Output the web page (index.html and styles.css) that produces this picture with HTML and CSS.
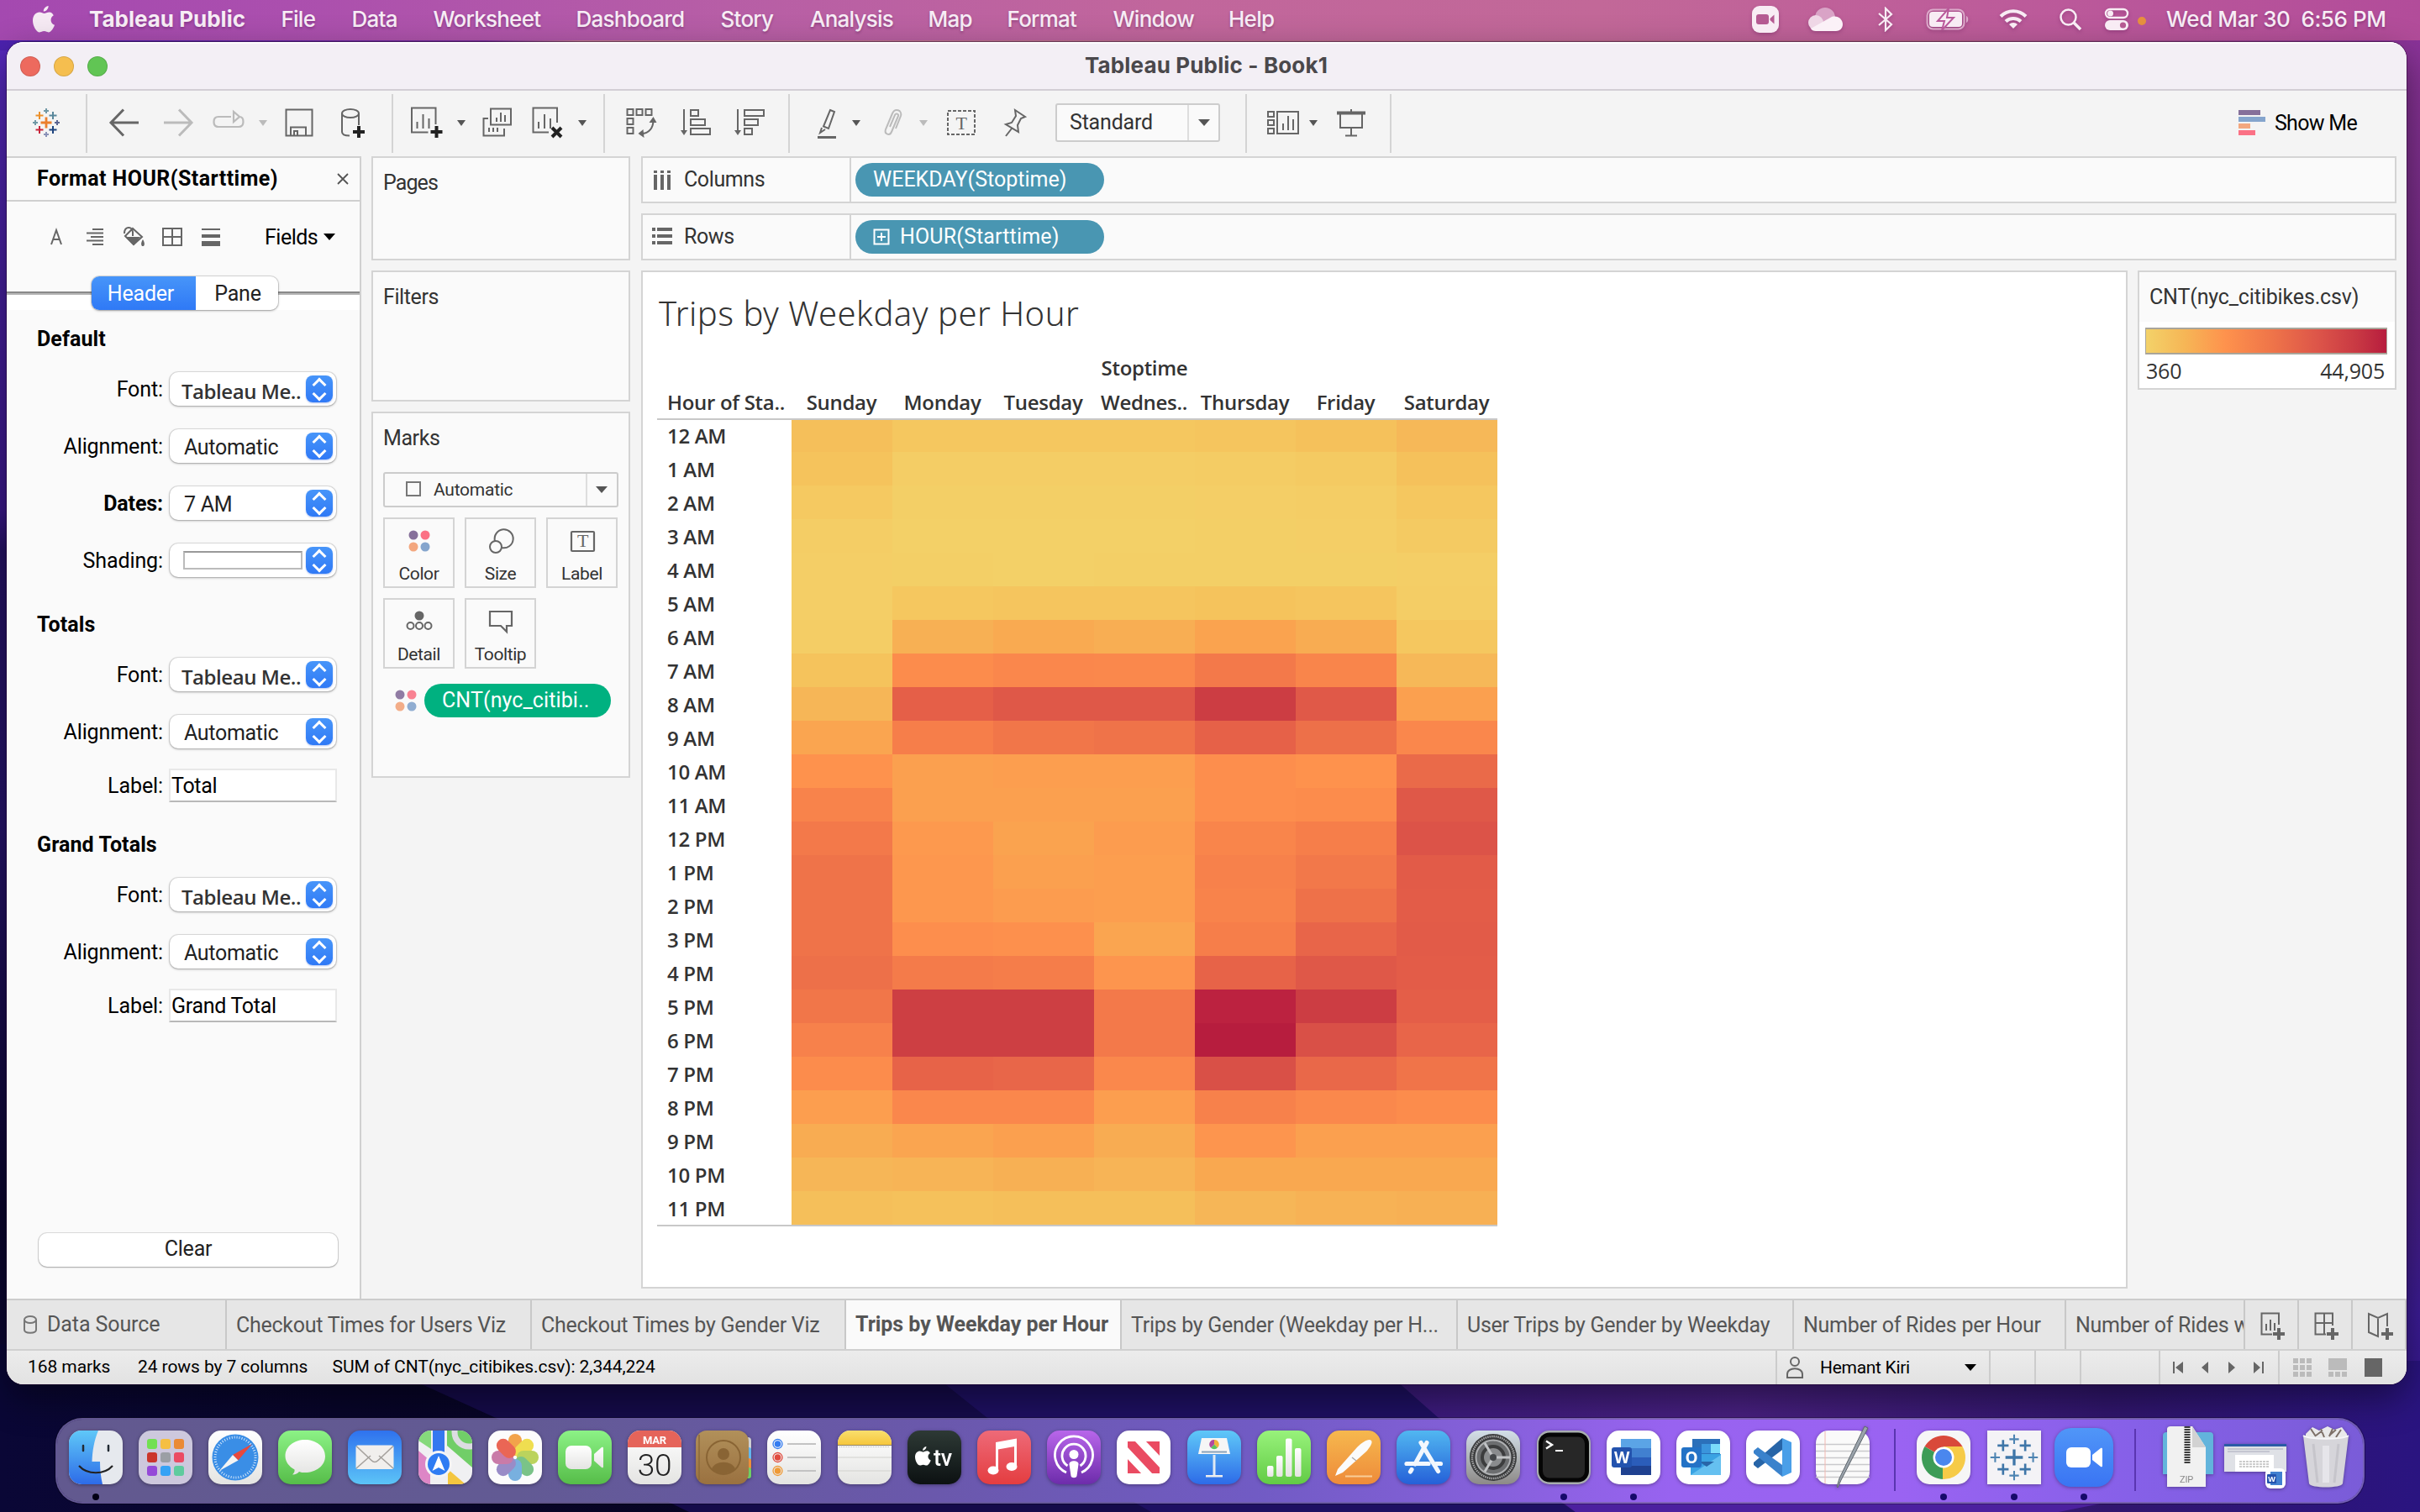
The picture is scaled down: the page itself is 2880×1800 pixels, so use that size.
FILE: index.html
```html
<!DOCTYPE html>
<html lang="en">
<head>
<meta charset="utf-8">
<title>Tableau Public - Book1</title>
<link rel="stylesheet" href="styles.css">
</head>
<body>
<svg class="wallpaper" viewBox="0 0 2880 1800" preserveAspectRatio="none">
  <defs>
    <linearGradient id="wl" x1="0" y1="0" x2="0" y2="1"><stop offset="0" stop-color="#5a2cc4"/><stop offset=".2" stop-color="#451f9c"/><stop offset=".37" stop-color="#3a1888"/><stop offset=".4" stop-color="#241262"/><stop offset=".6" stop-color="#26146a"/><stop offset=".75" stop-color="#160b48"/><stop offset=".88" stop-color="#0a052c"/><stop offset="1" stop-color="#0c0834"/></linearGradient>
    <linearGradient id="wr" x1="0" y1="0" x2="0" y2="1"><stop offset="0" stop-color="#8f359c"/><stop offset=".2" stop-color="#702a80"/><stop offset=".5" stop-color="#60246e"/><stop offset=".75" stop-color="#4a1f78"/><stop offset=".87" stop-color="#3c1c96"/><stop offset="1" stop-color="#2c1280"/></linearGradient>
    <linearGradient id="wb" x1="0" y1="0" x2="1" y2="0"><stop offset="0" stop-color="#3a1a7c"/><stop offset=".35" stop-color="#482080"/><stop offset=".7" stop-color="#31166e"/><stop offset="1" stop-color="#2a1480"/></linearGradient>
    <linearGradient id="wt" x1="0" y1="0" x2="1" y2="0"><stop offset="0" stop-color="#4c22b0"/><stop offset=".2" stop-color="#7a2f9c"/><stop offset=".24" stop-color="#c07a90"/><stop offset=".8" stop-color="#b06080"/><stop offset="1" stop-color="#8a3299"/></linearGradient>
    <linearGradient id="wd" x1="0" y1="0" x2="1" y2="0"><stop offset="0" stop-color="#0a0736"/><stop offset=".4" stop-color="#08052a"/><stop offset="1" stop-color="#07041f"/></linearGradient>
  </defs>
  <rect width="2880" height="1800" fill="url(#wr)"/>
  <rect width="1440" height="1640" fill="url(#wl)"/>
  <rect y="48" width="2880" height="12" fill="url(#wt)"/>
  <rect y="1600" width="1000" height="200" fill="url(#wd)"/>
  <path d="M440 1620L590 1688L820 1800H2000V1620z" fill="#150b4a"/>
  <path d="M1090 1620L1175 1688L1370 1800H2000V1620z" fill="#1e1062"/>
  <path d="M1635 1620L1712 1688L1875 1800H2880V1620z" fill="url(#wb)"/>
  <path d="M1862 1790L1875 1800H2450L2500 1790z" fill="#4c209f"/>
</svg>

<header class="menubar">
  <svg class="apple" viewBox="0 0 26 32"><path d="M18.600 0c.2 3.300-2.600 6.600-5.800 6.600C12.500 3.500 15.400.4 18.600 0zM24.800 11.200c-5 3-3.900 9.800 1.200 11.600-1.600 4.600-4.500 8.600-7.200 8.600-2 0-2.800-1.300-5.300-1.300s-3.500 1.300-5.300 1.300C4.400 31.400 0 24 0 17.400 0 11 4 7.500 8 7.500c2.400 0 4.200 1.500 5.700 1.500 1.400 0 3.500-1.600 6.200-1.600 1.900 0 3.800 1.300 4.900 3.800z" fill="#f6eaf4"/></svg>
  <b>Tableau Public</b><span style="width:84px">File</span><span style="width:97px">Data</span><span style="width:170px">Worksheet</span><span style="width:172px">Dashboard</span><span style="width:106.500px">Story</span><span style="width:140.500px">Analysis</span><span style="width:94px">Map</span><span style="width:126px">Format</span><span style="width:137.500px">Window</span><span style="width:80px">Help</span>
  <div class="tray">
    <svg width="34" height="34" viewBox="0 0 34 34"><rect x="1" y="1" width="32" height="32" rx="9" fill="#f8ecf4"/><rect x="6" y="11" width="15" height="12" rx="3" fill="#b55a92"/><path d="M22.500 16l5-4.500v11l-5-4.500z" fill="#b55a92"/></svg>
    <svg width="42" height="30" viewBox="0 0 42 30"><circle cx="20" cy="13" r="12" fill="#d9a3c6"/><circle cx="9" cy="19" r="9" fill="#efd7e6"/><path d="M3 26L28 12c8-2 13 4 13 9 0 5-4 8-8 8H9c-3 0-5-1-6-3z" fill="#fbf1f7"/></svg>
    <svg width="20" height="30" viewBox="0 0 20 30" fill="none" stroke="#f8ecf4" stroke-width="2.200"><path d="M2 8l15 13-7 7V2l7 7L2 22"/></svg>
    <svg width="52" height="26" viewBox="0 0 52 26"><rect x="1.500" y="1.500" width="44" height="23" rx="7" fill="none" stroke="#dca9ca" stroke-width="2"/><rect x="4" y="4" width="39" height="18" rx="4" fill="#f8ecf4"/><path d="M48 9c3 1 3 7 0 8z" fill="#dca9ca"/><path d="M27 0L14 15h8l-3 11L33 11h-8z" fill="#f8ecf4" stroke="#b9589a" stroke-width="2"/></svg>
    <svg width="34" height="26" viewBox="0 0 34 26" fill="none" stroke="#f8ecf4" stroke-width="4"><path d="M2 9.500a21 21 0 0 1 30 0"/><path d="M8 15.500a13 13 0 0 1 18 0"/><path d="M17 24l-5-5a7 7 0 0 1 10 0z" fill="#f8ecf4" stroke="none"/></svg>
    <svg width="28" height="28" viewBox="0 0 28 28" fill="none" stroke="#f8ecf4" stroke-width="2.500"><circle cx="11.500" cy="11.500" r="9"/><path d="M18 18l8 8" stroke-width="3.500"/></svg>
    <svg width="30" height="28" viewBox="0 0 30 28"><rect x="2" y="2" width="26" height="10" rx="5" fill="none" stroke="#f8ecf4" stroke-width="2.400"/><circle cx="7.500" cy="7" r="3.500" fill="#f8ecf4"/><rect x="1" y="15" width="28" height="12" rx="6" fill="#f8ecf4"/><circle cx="22.500" cy="21" r="3.600" fill="#b55a92"/></svg>
    <i class="rec"></i>
    <time>Wed Mar 30&nbsp; 6:56 PM</time>
  </div>
</header>

<main class="window">
  <div class="titlebar"><i class="light close"></i><i class="light minimise"></i><i class="light zoom"></i><h1>Tableau Public - Book1</h1></div>

  <div class="toolbar">
    <div class="group g0"><svg class="ic" viewBox="0 0 40 40" stroke-width="2.400" fill="none"><path d="M20 13.500v13M13.500 20h13" stroke="#eb7f2d" stroke-width="2.800"/><path d="M12 7v9M7.500 11.500h9" stroke="#eb912c"/><path d="M28 7v9M23.500 11.500h9" stroke="#59879b"/><path d="M12 24v9M7.500 28.500h9" stroke="#c8253a"/><path d="M28 24v9M23.500 28.500h9" stroke="#1f447e"/><path d="M20 3v6M17 6h6M7 17v6M4 20h6" stroke="#7199a6" stroke-width="2"/><path d="M33 17v6M30 20h6" stroke="#5c6692" stroke-width="2"/><path d="M20 31v6M17 34h6" stroke="#8a92b8" stroke-width="2"/></svg></div>
    <div class="group g1">
      <svg class="ic w64" viewBox="0 0 40 40"><path d="M37 20H4M19 4.500L4 20l15 15.500" stroke-width="3"/></svg>
      <svg class="ic w64 dim" viewBox="0 0 40 40"><path d="M3 20h33M21 4.500L36 20 21 35.500" stroke-width="3"/></svg>
      <svg class="ic w56 dim" viewBox="0 0 40 40"><path d="M23 13H8c-4 0-5.500 2-5.500 6s1.500 6 5.500 6h24c4 0 5.500-2 5.500-6s-1.500-6-4.500-6M26 7v12l7-6z" stroke-width="2.200"/></svg>
      <i class="cell w26"><i class="caret dim"></i></i>
      <svg class="ic w60" viewBox="0 0 40 40"><path d="M4.500 4.500h31v31h-31zM10 35v-9.500h18V35M14 35v-5h4v5"/></svg>
      <svg class="ic w68" viewBox="0 0 40 40"><path d="M7 9v22c0 3 4 4.500 9 4.500M27 9v14"/><ellipse cx="17" cy="9" rx="10" ry="5"/><path d="M27 24v14M20 31h14" stroke="#222" stroke-width="4"/></svg>
    </div>
    <div class="group g2">
      <svg class="ic w61" viewBox="0 0 40 40"><path d="M31 22V2.500H2.500v29H22M9 27v-8M16 27V10M23 27V15"/><path d="M32 24v14M25 31h14" stroke="#222" stroke-width="4"/></svg>
      <i class="cell w22"><i class="caret"></i></i>
      <svg class="ic w64" viewBox="0 0 40 40"><path d="M12 3.500h24v19H12zM19 19v-5M24 19V8M29 19v-8M9 15H3.500v20.500H28V27M10 31v-5M15 31v-5M20 31v-5"/></svg>
      <svg class="ic w56" viewBox="0 0 40 40"><path d="M31 20V2.500H2.500v29H21M9 27v-8M16 27V10M23 27V15"/><path d="M25 26l11 11M36 26L25 37" stroke="#222" stroke-width="4"/></svg>
      <i class="cell w26"><i class="caret"></i></i>
    </div>
    <div class="group g3">
      <svg class="ic w65" viewBox="0 0 40 40"><path d="M3 4h7v7H3zM14 4h7v7h-7zM25 4h7v7h-7zM3 15h7v7H3zM3 26h7v7H3zM34 17c0 9-5 16-14 16" /><path d="M29 20l5-7 4 7zM22 28l-6 5 7 5z" fill="#666" stroke="none"/></svg>
      <svg class="ic w64" viewBox="0 0 40 40"><path d="M6 4v28M14 5h9v7h-9zM14 16h17v7H14zM14 27h23v7H14z"/><path d="M2 29h8l-4 6z" fill="#666" stroke="none"/></svg>
      <svg class="ic w64" viewBox="0 0 40 40"><path d="M6 4v28M14 5h23v7H14zM14 16h16v7H14zM14 27h9v7h-9z"/><path d="M2 29h8l-4 6z" fill="#666" stroke="none"/></svg>
    </div>
    <div class="group g4">
      <svg class="ic w46" viewBox="0 0 40 40"><path d="M24 5l5 2-7 20-6-2.500zM14 26l-2 6 6-4" /><path d="M9 37.500h22" stroke-width="3"/></svg>
      <i class="cell w24"><i class="caret"></i></i>
      <svg class="ic w60 dim" viewBox="0 0 40 40"><path d="M18 25l6-14c1-3 5-1 4 1l-8 19c-2 5-9 3-7-3l8-19c3-7 12-4 10 3l-6 15"/></svg>
      <i class="cell w16"><i class="caret dim"></i></i>
      <svg class="ic w74" viewBox="0 0 40 40"><rect x="4" y="6" width="32" height="28" stroke-dasharray="4 2"/><text x="20" y="27.500">T</text></svg>
      <svg class="ic w52" viewBox="0 0 40 40"><path d="M21 5l12 8-5 2-4 8 1 8-15-9 7-2 5-8zM17 27l-7 9"/></svg>
      <div class="combo std"><span>Standard</span><i class="caret big"></i></div>
    </div>
    <div class="group g5">
      <svg class="ic w52" viewBox="0 0 40 40"><path d="M2 7h7v6H2zM2 17h7v6H2zM2 27h7v6H2zM13 7h25v26H13zM20 29v-8M26 29V12M32 29V16"/></svg>
      <i class="cell w20"><i class="caret"></i></i>
      <svg class="ic w70" viewBox="0 0 40 40"><path d="M7 9v17h26V9M20 4v4M20 26v9M13 35.500h14"/><path d="M3 8.500h34" stroke-width="4"/></svg>
    </div>
    <div class="showme"><svg width="32" height="32" viewBox="0 0 32 32"><path d="M0 0h26v6H0z" fill="#86709a"/><path d="M0 8h32v6H0z" fill="#85a5cd"/><path d="M0 16h14v6H0z" fill="#f3a77f"/><path d="M0 24h20v6H0z" fill="#fb7185"/></svg><span>Show Me</span></div>
  </div>

  <div class="work">
    <aside class="format">
      <div class="fhead"><b>Format HOUR(Starttime)</b><svg width="16" height="16" viewBox="0 0 16 16" stroke="#555" stroke-width="1.800"><path d="M2 2l12 12M14 2L2 14"/></svg></div>
      <div class="ficons">
        <svg viewBox="0 0 26 26"><path d="M7 22L13 5l6 17M9 16h8" stroke-width="2"/></svg>
        <svg viewBox="0 0 26 26"><path d="M10 4h13M3 8.500h20M8 13h15M3 17.500h20M10 22h13" stroke-width="2"/></svg>
        <svg viewBox="0 0 26 26"><path d="M12 3l11 10-10 9L3 12zM2 9c0-9 9-9 10-2v5"/><path d="M3 13h18l-8 10zM24 16c-3 5-2 8 0 8s3-3 0-8z" fill="#666" stroke="none"/></svg>
        <svg viewBox="0 0 26 26"><path d="M2 3h22v20H2zM13 3v20M2 13h22" stroke-width="2"/></svg>
        <svg viewBox="0 0 26 26"><path d="M2 4h22" stroke-width="2"/><path d="M2 12h22" stroke-width="4"/><path d="M2 21h22" stroke-width="6"/></svg>
        <span>Fields</span><i class="tri"></i>
      </div>
      <div class="segwrap"><div class="seg"><span class="sel-tab">Header</span><span>Pane</span></div></div>
      <section class="s1">
        <h2>Default</h2>
        <div class="row"><label>Font:</label><div class="sel"><b>Tableau Me..</b><i class="step"></i></div></div>
        <div class="row"><label>Alignment:</label><div class="sel"><span>Automatic</span><i class="step"></i></div></div>
        <div class="row"><label><b>Dates:</b></label><div class="sel"><span>7 AM</span><i class="step"></i></div></div>
        <div class="row"><label>Shading:</label><div class="sel"><em class="swatch"></em><i class="step"></i></div></div>
      </section>
      <section class="s2">
        <h2>Totals</h2>
        <div class="row"><label>Font:</label><div class="sel"><b>Tableau Me..</b><i class="step"></i></div></div>
        <div class="row"><label>Alignment:</label><div class="sel"><span>Automatic</span><i class="step"></i></div></div>
        <div class="row lab"><label>Label:</label><div class="inp">Total</div></div>
      </section>
      <section class="s3">
        <h2>Grand Totals</h2>
        <div class="row"><label>Font:</label><div class="sel"><b>Tableau Me..</b><i class="step"></i></div></div>
        <div class="row"><label>Alignment:</label><div class="sel"><span>Automatic</span><i class="step"></i></div></div>
        <div class="row lab"><label>Label:</label><div class="inp">Grand Total</div></div>
      </section>
      <div class="clear">Clear</div>
    </aside>

    <div class="cards">
      <div class="card pages">Pages</div>
      <div class="card filters">Filters</div>
      <div class="card marks">Marks
        <div class="combo auto"><i class="sq"></i><span>Automatic</span><i class="caret big"></i></div>
        <div class="btns">
          <div class="btn"><svg viewBox="0 0 40 40"><circle cx="13" cy="13" r="5.500" fill="#86709a"/><circle cx="27" cy="13" r="5.500" fill="#fb7185"/><circle cx="13" cy="27" r="5.500" fill="#f3a77f"/><circle cx="27" cy="27" r="5.500" fill="#85a5cd"/></svg>Color</div>
          <div class="btn"><svg viewBox="0 0 40 40" fill="none" stroke="#666" stroke-width="2"><path d="M13 20a11 11 0 1 1 8 8"/><circle cx="14" cy="27" r="7"/></svg>Size</div>
          <div class="btn"><svg viewBox="0 0 40 40" fill="none" stroke="#666" stroke-width="2.200"><rect x="7" y="9" width="27" height="23" rx="1"/><text x="20.500" y="27">T</text></svg>Label</div>
          <div class="btn"><svg viewBox="0 0 40 40" fill="none" stroke="#666" stroke-width="2"><circle cx="20" cy="13" r="4.500" fill="#666"/><circle cx="9.500" cy="25" r="4"/><circle cx="20" cy="25" r="4"/><circle cx="30.500" cy="25" r="4"/></svg>Detail</div>
          <div class="btn"><svg viewBox="0 0 40 40" fill="none" stroke="#666" stroke-width="2.200"><path d="M7 8h26v17h-6v7l-7-7H7z"/></svg>Tooltip</div>
        </div>
        <div class="pillrow"><svg width="40" height="40" viewBox="0 0 40 40"><circle cx="13" cy="13" r="5.500" fill="#917ca4"/><circle cx="27" cy="13" r="5.500" fill="#f98292"/><circle cx="13" cy="27" r="5.500" fill="#f3ad88"/><circle cx="27" cy="27" r="5.500" fill="#90add1"/></svg><span class="pill measure">CNT(nyc_citibi..</span></div>
      </div>
    </div>

    <div class="main">
      <div class="shelf"><div class="name"><svg viewBox="0 0 26 26"><path d="M5 2v3M13 2v3M21 2v3M5 7v18M13 7v18M21 7v18" stroke-width="4"/></svg>Columns</div><span class="pill dimension">WEEKDAY(Stoptime)</span></div>
      <div class="shelf"><div class="name"><svg viewBox="0 0 26 26"><path d="M1 4h4M1 12h4M1 20h4M7 4h18M7 12h18M7 20h18" stroke-width="4"/></svg>Rows</div><span class="pill dimension"><svg width="20" height="20" viewBox="0 0 20 20" fill="none" stroke="#fff" stroke-width="2"><path d="M1.500 1.500h17v17h-17zM10 5v10M5 10h10"/></svg><span class="hour">HOUR(Starttime)</span></span></div>
      <div class="lower">
        <div class="viz">
          <h3>Trips by Weekday per Hour</h3>
          <div class="field">Stoptime</div>
          <div class="heads"><span>Hour of Sta..</span><span>Sunday</span><span>Monday</span><span>Tuesday</span><span>Wednes..</span><span>Thursday</span><span>Friday</span><span>Saturday</span></div>
          <div class="heat" id="heat"></div>
        </div>
        <div class="legend">
          <div class="lt">CNT(nyc_citibikes.csv)</div>
          <div class="ramp"></div>
          <div class="nums"><span>360</span><span>44,905</span></div>
        </div>
      </div>
    </div>
  </div>

  <nav class="tabs">
    <span class="ds"><svg width="18" height="24" viewBox="0 0 18 24" fill="none" stroke="#777" stroke-width="2"><path d="M2 6v12c0 5 14 5 14 0V6"/><ellipse cx="9" cy="6" rx="7" ry="4"/></svg>Data Source</span>
    <span style="width:363px">Checkout Times for Users Viz</span>
    <span style="width:374px">Checkout Times by Gender Viz</span>
    <span class="active" style="width:328px">Trips by Weekday per Hour</span>
    <span style="width:400px">Trips by Gender (Weekday per H...</span>
    <span style="width:400px">User Trips by Gender by Weekday</span>
    <span style="width:324px">Number of Rides per Hour</span>
    <span class="cut">Number of Rides w</span>
    <i><svg viewBox="0 0 40 40"><path d="M28 20V6.500H7.500v25H20M13 27v-8M18 27V14M23 27v-9"/><path d="M28 24v14M21 31h14" stroke-width="4"/></svg></i>
    <i><svg viewBox="0 0 40 40"><path d="M28 21V6.500H7.500v25H20M18 7v24M8 18h20"/><path d="M28 24v14M21 31h14" stroke-width="4"/></svg></i>
    <i><svg viewBox="0 0 40 40"><path d="M29 22V7l-11 5-11-5v22l11 5V13"/><path d="M29 24v14M22 31h14" stroke-width="4"/></svg></i>
  </nav>

  <footer class="status">
    <span style="width:131px">168 marks</span><span style="width:231.500px">24 rows by 7 columns</span><span>SUM of CNT(nyc_citibikes.csv): 2,344,224</span>
    <div class="user"><svg width="22" height="28" viewBox="0 0 22 28" fill="none" stroke="#666" stroke-width="2"><circle cx="11" cy="7" r="5"/><path d="M2 26v-4c0-9 18-9 18 0v4z"/></svg>Hemant Kiri<i class="tri"></i></div>
    <div style="width:54px"></div><div style="width:54px"></div><div style="width:94px"></div>
    <div class="nav"><svg width="110" height="18" viewBox="0 0 110 18" fill="#666"><path d="M0 2h2v14H0zM12 2v14L3 9zM42 2v14l-8-7zM66 2v14l8-7zM96 2v14l8-7zM106 2h2v14h-2z"/></svg></div>
    <div class="views"><svg width="108" height="24" viewBox="0 0 108 24"><path d="M0 1h6v6H0zM8 1h6v6H8zM16 1h6v6h-6zM0 9h6v6H0zM8 9h6v6H8zM16 9h6v6h-6zM0 17h6v6H0zM8 17h6v6H8zM16 17h6v6h-6zM42 1h22v14H42zM42 17h6v6h-6zM50 17h6v6h-6zM58 17h6v6h-6z" fill="#bbb"/><path d="M85 1h21v22H85z" fill="#666"/></svg></div>
  </footer>
</main>

<svg width="0" height="0" class="defs"><defs>
  <linearGradient id="gB" x1="0" y1="0" x2="0" y2="1"><stop offset="0" stop-color="#5fc8f8"/><stop offset="1" stop-color="#2d6be8"/></linearGradient>
  <linearGradient id="gG" x1="0" y1="0" x2="0" y2="1"><stop offset="0" stop-color="#8cf286"/><stop offset="1" stop-color="#56bd49"/></linearGradient>
  <linearGradient id="gM" x1="0" y1="0" x2="0" y2="1"><stop offset="0" stop-color="#2f72ee"/><stop offset="1" stop-color="#5cc4f7"/></linearGradient>
  <linearGradient id="gW" x1="0" y1="0" x2="0" y2="1"><stop offset="0" stop-color="#fff"/><stop offset="1" stop-color="#e4e4e2"/></linearGradient>
  <linearGradient id="gY" x1="0" y1="0" x2="0" y2="1"><stop offset="0" stop-color="#f9df6d"/><stop offset="1" stop-color="#f6c63c"/></linearGradient>
  <linearGradient id="gK" x1="0" y1="0" x2="0" y2="1"><stop offset="0" stop-color="#2d3935"/><stop offset="1" stop-color="#0c1112"/></linearGradient>
  <linearGradient id="gR" x1="0" y1="0" x2="0" y2="1"><stop offset="0" stop-color="#ee6a78"/><stop offset="1" stop-color="#e43d40"/></linearGradient>
  <linearGradient id="gP" x1="0" y1="0" x2="0" y2="1"><stop offset="0" stop-color="#b866ea"/><stop offset="1" stop-color="#6d2cab"/></linearGradient>
  <linearGradient id="gN" x1="0" y1="0" x2="0" y2="1"><stop offset="0" stop-color="#98f27b"/><stop offset="1" stop-color="#62cb45"/></linearGradient>
  <linearGradient id="gO" x1="0" y1="0" x2="0" y2="1"><stop offset="0" stop-color="#f6b84e"/><stop offset="1" stop-color="#ee8b3a"/></linearGradient>
  <linearGradient id="gA" x1="0" y1="0" x2="0" y2="1"><stop offset="0" stop-color="#51b7f1"/><stop offset="1" stop-color="#2560d8"/></linearGradient>
  <linearGradient id="gS" x1="0" y1="0" x2="0" y2="1"><stop offset="0" stop-color="#d3dfe8"/><stop offset="1" stop-color="#8d8a88"/></linearGradient>
  <linearGradient id="gC" x1="0" y1="0" x2="0" y2="1"><stop offset="0" stop-color="#b1905a"/><stop offset="1" stop-color="#9a7140"/></linearGradient>
  <linearGradient id="gZ" x1="0" y1="0" x2="0" y2="1"><stop offset="0" stop-color="#5096f8"/><stop offset="1" stop-color="#3a74f3"/></linearGradient>
  <clipPath id="rr"><rect width="64" height="64" rx="15"/></clipPath>
</defs></svg>

<div class="dock">
  <div class="app on"><svg viewBox="0 0 64 64"><g clip-path="url(#rr)"><path d="M0 0h64v64H0z" fill="#e6e9ee"/><path d="M0 0h35c-5 12-7 24-7.500 37H37c0 10 1 18 3 27H0z" fill="url(#gB)"/></g><path d="M17 18v6M47 18v6" stroke="#222a33" stroke-width="2.500" stroke-linecap="round"/><path d="M12 42c10 11 30 11 40 0" fill="none" stroke="#222" stroke-width="2.200"/></svg></div>
  <div class="app"><svg viewBox="0 0 64 64"><rect width="64" height="64" rx="15" fill="#cdc8dd"/><g><rect x="10" y="10" width="12" height="12" rx="3" fill="#72e052"/><rect x="26" y="10" width="12" height="12" rx="3" fill="#f5bf42"/><rect x="42" y="10" width="12" height="12" rx="3" fill="#ea8a36"/><rect x="10" y="26" width="12" height="12" rx="3" fill="#cb352c"/><rect x="26" y="26" width="12" height="12" rx="3" fill="#9b9fa5"/><rect x="42" y="26" width="12" height="12" rx="3" fill="#eb4b63"/><rect x="10" y="42" width="12" height="12" rx="3" fill="#9549d8"/><rect x="26" y="42" width="12" height="12" rx="3" fill="#36a2f5"/><rect x="42" y="42" width="12" height="12" rx="3" fill="#5fcb9e"/></g></svg></div>
  <div class="app"><svg viewBox="0 0 64 64"><rect width="64" height="64" rx="15" fill="url(#gW)"/><circle cx="32" cy="32" r="27.500" fill="#3a8ee6"/><circle cx="32" cy="32" r="24" fill="none" stroke="#cfe4fa" stroke-width="3" stroke-dasharray="1 2"/><path d="M52 16L35.500 35.500 29 29z" fill="#e8483c"/><path d="M13 48l16-19 6.500 6.500z" fill="#f4f4f4"/></svg></div>
  <div class="app"><svg viewBox="0 0 64 64"><rect width="64" height="64" rx="15" fill="url(#gG)"/><path d="M32 11c13 0 24 8 24 19.500S45 50 32 50c-3 0-5 0-7-1-2 2-4 3.500-8 3.500 2-2 3-4 2.500-6C13 43 8.500 37 8.500 30.500 8.500 19 19 11 32 11z" fill="url(#gW)"/></svg></div>
  <div class="app"><svg viewBox="0 0 64 64"><rect width="64" height="64" rx="15" fill="url(#gM)"/><rect x="9.500" y="17.500" width="45" height="28.500" rx="2.500" fill="#f1efed"/><path d="M10 45l17-15M54 45L37 30M10 18.500l18 17c2.500 2.500 5.500 2.500 8 0l18-17" fill="none" stroke="#a5a19d" stroke-width="1.600"/></svg></div>
  <div class="app"><svg viewBox="0 0 64 64"><g clip-path="url(#rr)"><path d="M0 0h64v64H0z" fill="#f0f0f2"/><path d="M0 0h15v22L0 12z" fill="#86d97c"/><path d="M34 0h30v44L34 18z" fill="#71ce68"/><path d="M0 24l14 12v28H0z" fill="#dd86c6"/><path d="M35 46l21 18H35z" fill="#f4c63f"/><circle cx="60" cy="2" r="17" fill="none" stroke="#dcdce2" stroke-width="7"/><path d="M17 0h14v30H17z" fill="#3478f0"/></g><circle cx="24" cy="40" r="16" fill="#f4f4f6"/><circle cx="24" cy="40" r="13" fill="#2f7cf3"/><path d="M24 30l7.500 18-7.500-4-7.500 4z" fill="#fff"/></svg></div>
  <div class="app"><svg viewBox="0 0 64 64"><rect width="64" height="64" rx="15" fill="#fcfcfc"/><g opacity=".9"><rect x="24" y="4" width="16" height="26" rx="8" fill="#f29a38"/><rect x="24" y="4" width="16" height="26" rx="8" fill="#eedb3e" transform="rotate(45 32 32)"/><rect x="24" y="4" width="16" height="26" rx="8" fill="#b4cf4c" transform="rotate(90 32 32)"/><rect x="24" y="4" width="16" height="26" rx="8" fill="#6dbd7c" transform="rotate(135 32 32)"/><rect x="24" y="4" width="16" height="26" rx="8" fill="#6aa8dc" transform="rotate(180 32 32)"/><rect x="24" y="4" width="16" height="26" rx="8" fill="#8f80c2" transform="rotate(225 32 32)"/><rect x="24" y="4" width="16" height="26" rx="8" fill="#c46ea0" transform="rotate(270 32 32)"/><rect x="24" y="4" width="16" height="26" rx="8" fill="#e95643" transform="rotate(315 32 32)"/></g></svg></div>
  <div class="app"><svg viewBox="0 0 64 64"><rect width="64" height="64" rx="15" fill="url(#gG)"/><rect x="9" y="18" width="31" height="28" rx="7" fill="url(#gW)"/><path d="M43 28l9-8c1-.8 2 0 2 1v22c0 1-1 1.800-2 1l-9-8z" fill="url(#gW)"/></svg></div>
  <div class="app"><svg viewBox="0 0 64 64"><g clip-path="url(#rr)"><path d="M0 0h64v64H0z" fill="url(#gW)"/><path d="M0 0h64v20H0z" fill="#e5645a"/></g><text x="32" y="15.500" class="mar">MAR</text><text x="32" y="54" class="day">30</text></svg></div>
  <div class="app"><svg viewBox="0 0 68 64" class="wide"><rect x="48" y="8" width="18" height="16" rx="4" fill="#cfcfd2"/><rect x="48" y="20" width="18" height="16" rx="3" fill="#62b7ef"/><rect x="48" y="33" width="18" height="14" rx="3" fill="#ee8e3a"/><rect x="48" y="44" width="18" height="13" rx="3" fill="#6fd064"/><rect width="63" height="64" rx="13" fill="url(#gC)"/><path d="M4 5v54" stroke="#8d6a38" stroke-width="1.500"/><circle cx="33" cy="32" r="20" fill="none" stroke="#896434" stroke-width="2"/><circle cx="33" cy="28" r="7" fill="#896434"/><path d="M19 46c3-11 25-11 28 0-8 7-20 7-28 0z" fill="#896434"/></svg></div>
  <div class="app"><svg viewBox="0 0 64 64"><rect width="64" height="64" rx="15" fill="url(#gW)"/><g fill="none" stroke-width="1.300"><circle cx="12.500" cy="16" r="5.500" stroke="#347cf0"/><circle cx="12.500" cy="32" r="5.500" stroke="#e04b3e"/><circle cx="12.500" cy="48" r="5.500" stroke="#ef9a36"/></g><circle cx="12.500" cy="16" r="3.800" fill="#347cf0"/><circle cx="12.500" cy="32" r="3.800" fill="#e04b3e"/><circle cx="12.500" cy="48" r="3.800" fill="#ef9a36"/><path d="M24 16h34M24 32h34M24 48h34" stroke="#c3c3c3" stroke-width="1.800"/></svg></div>
  <div class="app"><svg viewBox="0 0 64 64"><g clip-path="url(#rr)"><path d="M0 0h64v64H0z" fill="url(#gW)"/><path d="M0 0h64v17H0z" fill="url(#gY)"/><path d="M0 17.500h64" stroke="#8d8060"/></g><path d="M2 19.500h60" stroke="#bbb" stroke-dasharray="1 1"/><path d="M0 32h64M0 48h64" stroke="#d2d2ce" stroke-width="1.200"/></svg></div>
  <div class="app"><svg viewBox="0 0 64 64"><rect width="64" height="64" rx="15" fill="url(#gK)"/><path d="M18.600 0c.2 3.300-2.600 6.600-5.800 6.600C12.500 3.500 15.400.4 18.600 0zM24.800 11.200c-5 3-3.900 9.800 1.200 11.600-1.600 4.600-4.500 8.600-7.200 8.600-2 0-2.800-1.300-5.300-1.300s-3.500 1.300-5.300 1.300C4.400 31.400 0 24 0 17.400 0 11 4 7.500 8 7.500c2.400 0 4.200 1.500 5.700 1.500 1.400 0 3.500-1.600 6.200-1.600 1.900 0 3.800 1.300 4.900 3.800z" transform="translate(9 19) scale(.72)" fill="#fff"/><text x="42" y="42" class="tv">tv</text></svg></div>
  <div class="app"><svg viewBox="0 0 64 64"><rect width="64" height="64" rx="15" fill="url(#gR)"/><path d="M45.500 12v31" stroke="#fff" stroke-width="3"/><path d="M22 14l25-4.500v9L22 23zM22 14h3v34h-3z" fill="#fff"/><ellipse cx="19" cy="47.500" rx="6.500" ry="5" fill="#fff"/><ellipse cx="41" cy="43" rx="6.500" ry="5" fill="#fff"/></svg></div>
  <div class="app"><svg viewBox="0 0 64 64"><rect width="64" height="64" rx="15" fill="url(#gP)"/><g fill="none" stroke="#fff" stroke-width="2.800"><path d="M23 50a22.500 22.500 0 1 1 18 0"/><path d="M24.500 42a14 14 0 1 1 15 0"/></g><circle cx="32" cy="28.500" r="5.500" fill="#fff"/><path d="M26.500 40c0-5 11-5 11 0l-2 14c-.5 3-6.500 3-7 0z" fill="#fff"/></svg></div>
  <div class="app"><svg viewBox="0 0 64 64"><rect width="64" height="64" rx="15" fill="#fff"/><path d="M13 13h38v38H13z" fill="#ea4b62"/><path d="M21 12h13L52 31v14zM12 19l31 33H30L12 33z" fill="#fff"/></svg></div>
  <div class="app"><svg viewBox="0 0 64 64"><rect width="64" height="64" rx="15" fill="url(#gB)"/><path d="M17 9h30l4 19H13z" fill="#f6f6f6"/><path d="M17 25.500h30" stroke="#8ba2b8" stroke-width="2"/><path d="M32 16.500v-5.500a5.500 5.500 0 0 1 4 9.500z" fill="#f0b23c"/><path d="M32 16.500l4 4a5.500 5.500 0 0 1-8 0z" fill="#5cc55c"/><path d="M32 11v5.500l-4 4a5.500 5.500 0 0 1 4-9.500z" fill="#b04aa0"/><path d="M30.500 29h3v24h-3z" fill="#dfe9f3"/><path d="M22 53h20v2.500H22z" fill="#eee"/></svg></div>
  <div class="app"><svg viewBox="0 0 64 64"><rect width="64" height="64" rx="15" fill="url(#gN)"/><g fill="url(#gW)"><rect x="12" y="42" width="7.500" height="13" rx="2"/><rect x="23" y="30" width="7.500" height="25" rx="2"/><rect x="34" y="9.500" width="7.500" height="45.500" rx="2"/><rect x="45" y="21" width="7.500" height="34" rx="2"/></g></svg></div>
  <div class="app"><svg viewBox="0 0 64 64"><rect width="64" height="64" rx="15" fill="url(#gO)"/><path d="M22 54.500h32" stroke="#f9cd98" stroke-width="2"/><path d="M53 12c2 3-2 8-6 13L19 50l-9 4 3-8 23-26c6-6 14-11 17-8z" fill="#fbfbfb"/><path d="M30 32l5 4" stroke="#aaa" stroke-width="1.500"/></svg></div>
  <div class="app"><svg viewBox="0 0 64 64"><rect width="64" height="64" rx="15" fill="url(#gA)"/><g stroke="#f2f7fd" stroke-width="5.200" stroke-linecap="round"><path d="M36 14.500L22 40M29 14.500l20.500 34M12 39.500h26M47 39.500h5.500M18 46.500l-1.500 2.500"/></g></svg></div>
  <div class="app"><svg viewBox="0 0 64 64"><rect width="64" height="64" rx="15" fill="url(#gS)"/><circle cx="32" cy="32" r="28" fill="#3a3b3c"/><circle cx="32" cy="32" r="25" fill="none" stroke="#a3a4a5" stroke-width="2.500" stroke-dasharray="1.500 1"/><circle cx="32" cy="32" r="20.500" fill="#6c6e70" stroke="#aeb0b2" stroke-width="2"/><circle cx="32" cy="32" r="13" fill="#8a8c8e" stroke="#3c3d3e" stroke-width="4"/><path d="M32 32h20M32 32l-10-17M32 32L22 49" stroke="#c2c4c6" stroke-width="3"/><circle cx="32" cy="32" r="4" fill="#44474a"/></svg></div>
  <div class="app on"><svg viewBox="0 0 64 64"><rect width="64" height="64" rx="15" fill="#a9aeb0"/><rect x="2" y="2.500" width="60" height="59" rx="13" fill="#050505"/><rect x="7" y="7.500" width="50" height="49" rx="8" fill="#272727"/><path d="M11 12.500l7 4.500-7 4.500" fill="none" stroke="#fff" stroke-width="2.400"/><path d="M22 24h9" stroke="#fff" stroke-width="2"/></svg></div>
  <div class="app on"><svg viewBox="0 0 64 64"><rect width="64" height="64" rx="15" fill="#fff"/><path d="M17 10h36v11H17z" fill="#5ba4e6"/><path d="M17 21h36v11H17z" fill="#4180d0"/><path d="M17 32h36v10H17z" fill="#2b5dba"/><path d="M17 42h36v11H17z" fill="#1f4190"/><rect x="6" y="20" width="24" height="24" rx="3" fill="#2353ae"/><text x="18" y="39" class="ms">W</text></svg></div>
  <div class="app"><svg viewBox="0 0 64 64"><rect width="64" height="64" rx="15" fill="#fff"/><path d="M19 10h33v22H19z" fill="#2b70ba"/><path d="M30 16h11v11H30z" fill="#3a95dc"/><path d="M41 16h11v11H41z" fill="#7bdcfa"/><path d="M17 28h36v25H17z" fill="#3aa3e3"/><path d="M17 53l36-24v24z" fill="#65c0f0"/><path d="M27 37h18l-9 6z" fill="#2866a8"/><rect x="6" y="20" width="24" height="24" rx="3" fill="#2372c6"/><text x="18" y="39" class="ms">O</text></svg></div>
  <div class="app"><svg viewBox="0 0 64 64"><rect width="64" height="64" rx="15" fill="#fff"/><path d="M43 9l11 5v36l-11 5z" fill="#4a9fe8"/><path d="M43 9v14L14 45l-5-4v-3z" fill="#2765a8"/><path d="M43 55V41L14 20l-5 4v3z" fill="#3a82cc"/></svg></div>
  <div class="app"><svg viewBox="0 -6 64 76" class="tall"><rect width="64" height="64" rx="15" fill="#fafafa"/><path d="M0 16.500h64M0 24.500h64M0 32.500h64M0 40.500h64M0 48.500h64M0 55.500h64" stroke="#c9c9cc" stroke-width="1.300"/><path d="M11 1v62" stroke="#f2b8b0"/><path d="M58-5l4 2-32 62-4 9-1-1 3-10z" fill="#9aa3ab" stroke="#5f666d" stroke-width="1"/></svg></div>
  <i class="dsep"></i>
  <div class="app on"><svg viewBox="0 0 64 64"><rect width="64" height="64" rx="15" fill="#f6f6f6"/><path d="M32 32L9.500 19A26 26 0 0 1 54.500 19z" fill="#d9493a"/><path d="M32 32L9.500 19A26 26 0 0 0 32 58z" fill="#3d9c57"/><path d="M32 32h-1v26A26 26 0 0 0 54.500 19H32z" fill="#f6cb47"/><circle cx="32" cy="32" r="12.500" fill="#fff"/><circle cx="32" cy="32" r="10" fill="#4a87ee"/></svg></div>
  <div class="app on"><svg viewBox="0 0 68 68" class="wide"><path d="M0 0h68v68H0z" fill="#f4f3f6"/><path d="M34 24v20M23 34h22" stroke="#3f76a8" stroke-width="3.500"/><path d="M20 12v14M13 19h14M48 12v14M41 19h14M20 42v14M13 49h14M48 42v14M41 49h14" stroke="#3f76a8" stroke-width="2.800"/><path d="M34 5v12M28 11h12M34 51v12M28 57h12M10 28v12M4 34h12M58 28v12M52 34h12" stroke="#4d84b2" stroke-width="2.200"/></svg></div>
  <div class="app on"><svg viewBox="0 0 70 70" class="huge"><rect width="70" height="70" rx="20" fill="url(#gZ)"/><rect x="14" y="23" width="29" height="24" rx="6" fill="#fff"/><path d="M45 32l10-8c1-.6 2 0 2 1v20c0 1-1 1.600-2 1l-10-8z" fill="#fff"/></svg></div>
  <i class="dsep two"></i>
  <div class="app"><svg viewBox="0 0 64 76" class="tall"><path d="M2 12c0-3 2-4 4-4h52c3 0 4 2 4 4v46H2z" fill="#62b4dc"/><path d="M11 1h26l16 25v47H7V4c0-2 2-3 4-3z" fill="#f1f1f1"/><path d="M37 1v25h16z" fill="#d2d2d2"/><path d="M31 1v44" stroke="#3c3c3c" stroke-width="7" stroke-dasharray="2 1"/><text x="30" y="68" class="zip">ZIP</text></svg></div>
  <div class="app thumb"><svg viewBox="0 0 76 56"><path d="M0 2h74v33H0z" fill="#dfe1e6"/><path d="M0 2h74v3H0z" fill="#2b5aa6"/><path d="M4 8h66M4 11h50" stroke="#aab" stroke-width="1"/><path d="M13 15h46v20H13z" fill="#fff"/><path d="M18 23h36M18 26h36M18 29h36" stroke="#999" stroke-width="1" stroke-dasharray="3 1"/><rect x="49" y="31" width="24" height="24" rx="6" fill="#fff"/><rect x="55" y="35" width="14" height="16" fill="#4180d0"/><rect x="51" y="38" width="11" height="11" rx="1" fill="#2353ae"/><text x="56.500" y="47" class="ms tiny">W</text></svg></div>
  <div class="app bin"><svg viewBox="0 0 64 76" class="tall"><path d="M8 10l8-8 8 4 10-5 8 4 9-3 6 8v8H8z" fill="#e9e9ea"/><path d="M14 4l6 9M26 4l4 10M40 4l-4 9M50 5l-6 9M20 12l8-6M36 12l8-7" stroke="#7d7068" stroke-width="2"/><path d="M5 12c8 5 46 5 54 0l-7 57c-1 6-39 6-40 0z" fill="#d6d5da"/><path d="M5 12c8 5 46 5 54 0" fill="none" stroke="#f6f6f8" stroke-width="2"/><path d="M17 22l5 46M47 22l-5 46" stroke="#c6c5cb" stroke-width="3"/><path d="M32 24v44" stroke="#e6e5ea" stroke-width="8"/></svg></div>
</div>
<script src="heat.js"></script>
</body>
</html>
```
FILE: styles.css
```css
*{box-sizing:border-box}
body{margin:0;width:2880px;height:1800px;overflow:hidden;display:flex;flex-direction:column;font:400 25px/30px Roboto,"Liberation Sans",sans-serif;color:#333;letter-spacing:-.2px;background:#1c0f5a}
i,em{font-style:normal}
h1,h2,h3{margin:0}
.wallpaper{position:absolute;inset:0;width:2880px;height:1800px;z-index:-1}
.defs{position:absolute}

/* macOS menu bar */
.menubar{height:48px;flex:none;display:flex;align-items:center;padding:0 39px 2px 39px;background:linear-gradient(90deg,#a449b0 0,#ab4fae 12%,#b75ea6 30%,#c1669c 48%,#c26898 66%,#bd5c9a 82%,#b24c9a 100%);color:#f8eef6;font:500 26px/46px Inter,sans-serif;letter-spacing:-.75px;text-shadow:0 2px 3px rgba(60,0,60,.3);white-space:pre}
.apple{width:26px;height:32px;margin-right:41px}
.menubar b{font-weight:700;letter-spacing:0;width:228.500px}
.tray{margin-left:auto;display:flex;align-items:center}
.tray svg{filter:drop-shadow(0 2px 2px rgba(60,0,60,.25))}
.tray svg:nth-of-type(1){margin-right:34px}
.tray svg:nth-of-type(2){margin-right:40px}
.tray svg:nth-of-type(3){margin-right:38px}
.tray svg:nth-of-type(4){margin-right:35px}
.tray svg:nth-of-type(5){margin-right:37px}
.tray svg:nth-of-type(6){margin-right:26px}
.tray svg:nth-of-type(7){margin-right:10px}
.rec{width:10px;height:10px;border-radius:50%;background:#e8913f;margin:4px 24px 0 0}
.tray time{letter-spacing:-.42px;width:263px}

/* Application window */
.window{flex:none;width:2856px;height:1598px;margin:2px 0 0 8px;border-radius:20px;overflow:hidden;background:#f4f4f4;display:flex;flex-direction:column;box-shadow:0 0 0 1px rgba(30,0,40,.45),0 16px 44px rgba(0,0,0,.45)}
.titlebar{height:58px;flex:none;background:#f3eff5;border-top:2px solid #fdfcfd;border-bottom:2px solid #d3ced5;display:flex;align-items:center;padding-left:16px}
.light{flex:none;width:24px;height:24px;border-radius:50%;margin-right:16px;border:1px solid rgba(0,0,0,.12)}
.close{background:#ed6a5e}.minimise{background:#f5be4f}.zoom{background:#61c554}
.titlebar h1{flex:1;margin-right:137px;text-align:center;font:700 26px/52px Inter,sans-serif;letter-spacing:.15px;color:#4a484b;padding-bottom:2px}

.toolbar{height:78px;flex:none;display:flex;align-items:center}
.group{height:70px;display:flex;align-items:center;padding-bottom:2px;border-right:2px solid #d4d4d4;flex:none}
.ic{height:40px;flex:none;fill:none;stroke:#666;stroke-width:2}
.ic text,.btn text{fill:#666;stroke:none;font:22px "Liberation Serif",serif;text-anchor:middle}
.ic.dim{stroke:#bbb}
.g0{width:96px;justify-content:center}.g0 .ic{width:40px}
.g1{width:364px;padding-left:12px}.g2{width:252px;padding-left:9px}.g3{width:220px;padding-left:11px}.g4{width:544px;padding-left:21px}.g5{width:172px;padding-left:17px}
.w16{width:16px}.w20{width:20px}.w22{width:22px}.w24{width:24px}.w26{width:26px}.w46{width:46px}.w52{width:52px}.w56{width:56px}.w60{width:60px}.w61{width:61px}.w64{width:64px}.w65{width:65px}.w68{width:68px}.w70{width:70px}.w74{width:74px}
.cell{display:flex;justify-content:center;flex:none}
.caret{border:5px solid transparent;border-top:7px solid #555;border-bottom:0;width:0;height:0}
.caret.dim{border-top-color:#bbb}
.caret.big{border-width:8px 7px 0}
.combo{display:flex;align-items:center;border:2px solid #ccc;border-radius:3px;background:#fafafa}
.std{width:196px;height:46px;margin-left:23px}
.std span{width:157px;padding-left:15px;border-right:2px solid #ddd;line-height:42px}
.std .caret{margin-left:11px}
.showme{margin-left:auto;margin-right:59px;display:flex;align-items:center;color:#000;letter-spacing:-.7px}
.showme svg{margin:0 11px 0 0}

/* Format pane */
.work{height:1360px;flex:none;display:flex}
.format{width:422px;border-right:2px solid #d0d0d0;border-top:2px solid #d0d0d0;background:#fafafa;color:#000;display:flex;flex-direction:column}
.fhead{height:52px;border-bottom:2px solid #d0d0d0;display:flex;align-items:center;justify-content:space-between;padding:0 12px 0 36px;letter-spacing:.45px}
.ficons{height:84px;display:flex;align-items:center;padding-left:46px}
.ficons svg{width:26px;height:26px;margin-right:20px;fill:none;stroke:#666;stroke-width:2}
.ficons span{margin-left:31px;letter-spacing:-.5px;padding-top:1px}
.tri{border:7px solid transparent;border-top:8px solid #000;border-bottom:0;margin-left:7px}
.segwrap{margin-top:5px;height:40px;display:flex;justify-content:center;padding-left:3px;background:linear-gradient(#fafafa 0 18px,#8a8a8a 18px 20px,#b5b5b5 20px 22px,#fff 22px)}
.seg{width:222px;display:flex;border-radius:9px;background:#fff;overflow:hidden;box-shadow:0 0 0 1px rgba(0,0,0,.12),0 1px 3px rgba(0,0,0,.3)}
.seg span{width:98px;text-align:center;line-height:41px;color:#222;padding-left:3px}
.seg .sel-tab{width:124px;background:linear-gradient(#4795f9,#2f79f6);color:#fff;padding:0 6px 0 0}
h2{font:700 25px/30px Roboto,sans-serif;margin-left:36px;letter-spacing:.1px;padding-top:2px;height:30px}
.s1{margin-top:18px}.s2{margin-top:26px}.s3{margin-top:20px}
.s1,.s2,.s3{display:flex;flex-direction:column}
h2+.row{margin-top:26px}
.row{height:40px;margin-bottom:28px;display:flex;align-items:center}
.row:last-child{margin-bottom:14px}
.row.lab{margin-top:-4px}
.row label{width:186px;text-align:right;letter-spacing:-.1px;padding-top:2px}
.sel{width:198px;height:40px;margin-left:8px;border-radius:10px;background:#fff;box-shadow:0 0 0 1px rgba(0,0,0,.1),0 1px 3px rgba(0,0,0,.3);display:flex;align-items:center;padding:0 4px 0 16px;color:#222;letter-spacing:-.3px}
.sel b{font:600 24px/32px "Open Sans",sans-serif;letter-spacing:-.45px;padding-top:6px;color:#333;margin-left:-2px}
.sel span{padding-top:4px;padding-left:1px}
.step{margin-left:auto;flex:none;width:32px;height:32px;border-radius:8px;background:linear-gradient(#4795f9,#2f79f6);box-shadow:0 1px 2px rgba(0,60,200,.3);display:flex;flex-direction:column;align-items:center;justify-content:center;gap:3px}
.step:before,.step:after{content:"";width:9px;height:9px;border:solid #fff;border-width:3px 0 0 3px;transform:translateY(2px) rotate(45deg)}
.step:after{transform:translateY(-2px) rotate(225deg)}
.swatch{width:142px;height:22px;border:2px solid #bbb;border-top-color:#999}
.inp{width:200px;height:40px;margin-left:7px;background:#fff;border:2px solid #e8e8e8;border-bottom-color:#b8b8b8;padding-left:1px;line-height:38px;letter-spacing:-.3px}
.clear{margin:auto 26px 38px 38px;height:40px;border-radius:10px;background:#fff;box-shadow:0 0 0 1px rgba(0,0,0,.12),0 1px 2px rgba(0,0,0,.25);text-align:center;line-height:38px;color:#222}

/* Pages, Filters and Marks cards */
.cards{width:308px;margin-left:12px;display:flex;flex-direction:column;gap:12px;letter-spacing:-.4px}
.card{border:2px solid #d4d4d4;background:#fafafa;padding:15px 0 0 12px}
.pages{height:124px;letter-spacing:-.9px}.filters{height:156px}.marks{height:436px}
.auto{margin-top:25px;width:280px;height:42px;font-size:21px;letter-spacing:-.25px}
.auto .sq{width:18px;height:18px;border:2px solid #777;margin:-3px 15px 0 25px}
.auto span{width:183px;border-right:2px solid #ddd;line-height:38px}
.auto .caret{margin-left:10px}
.btns{display:grid;grid-template-columns:85px 85px 85px;column-gap:12px;row-gap:12px;margin-top:12px}
.btn{height:84px;border:2px solid #d4d4d4;display:flex;flex-direction:column;align-items:center;font-size:21px;line-height:24px;letter-spacing:-.4px}
.btn svg{width:40px;height:40px;margin:6px 0 7px}
.pillrow{display:flex;align-items:center;margin:18px 0 0 7px}
.pillrow svg{margin:0 2px 0 0}
.pill{height:40px;border-radius:20px;color:#fff;display:flex;align-items:center}
.measure{width:222px;background:#00b180;padding-left:21px;letter-spacing:.1px}
.dimension{width:296px;background:#4996b2;padding-left:21px;margin-left:5px;letter-spacing:0}
.dimension svg{margin-right:12px}
.hour{letter-spacing:.15px}

/* Shelves, view and legend */
.main{margin-left:13px;width:2089px;display:flex;flex-direction:column;gap:12px}
.shelf{height:56px;border:2px solid #d4d4d4;background:#fafafa;display:flex;align-items:center}
.name{width:248px;height:52px;border-right:2px solid #d4d4d4;display:flex;align-items:center;padding-left:10px;letter-spacing:-.4px;line-height:50px}
.name svg{width:26px;height:26px;margin-right:13px;stroke:#666}
.lower{display:flex;gap:12px;align-items:flex-start}
.viz{width:1769px;height:1212px;border:2px solid #d4d4d4;background:#fff;font:600 24px/30px "Open Sans","Noto Sans",sans-serif;letter-spacing:-.3px}
.viz h3{font:300 40px/52px "Noto Sans","Open Sans",sans-serif;letter-spacing:.5px;margin:23px 0 0 19px}
.field{margin:24px 0 0 177px;width:840px;text-align:center;line-height:30px;padding-bottom:1px}
.heads{display:grid;grid-template-columns:160px repeat(7,120px);margin:9px 0 0 17px;width:1000px;border-bottom:2px solid #c8c8c8;height:37px;text-align:center;line-height:32px}
.heads span{padding-right:1px}
.heads span:first-child{text-align:left;padding-left:12px}
.heat{display:grid;grid-template-columns:160px repeat(7,120px);grid-template-rows:38px repeat(23,40px);margin-left:17px;width:1000px;border-bottom:2px solid #c8c8c8}
.heat b{font-weight:600;padding-left:12px;line-height:41px}
.heat b:first-child{line-height:38px}
.legend{width:308px;height:142px;border:2px solid #d4d4d4;background:#fff}
.lt{height:59px;background:#fafafa;padding-left:12px;line-height:60px;letter-spacing:-.15px}
.ramp{height:32px;margin:7px 9px 0 7px;border:2px solid #a9a59a;border-width:2px 1px;background:linear-gradient(90deg,#f3d269,#f6b656 16%,#fe924d 33%,#ef7549 52%,#dc5449 72%,#c83843 88%,#b71d3e)}
.nums{display:flex;justify-content:space-between;padding:4px 12px 0 8px;font-family:"Open Sans",sans-serif}

/* Sheet tabs and status bar */
.tabs{height:62px;flex:none;display:flex;background:#e6e6e6;border-top:2px solid #ccc;border-bottom:2px solid #d0d0d0;color:#555;letter-spacing:-.26px;line-height:60px;white-space:nowrap}
.tabs span{border-right:2px solid #c8c8c8;padding-left:11px;flex:none;overflow:hidden}
.tabs .ds{width:262px;display:flex;align-items:center;padding-left:19px;gap:11px;letter-spacing:-.1px}
.tabs .active{background:#fafafa;font-weight:700;letter-spacing:-.03px;line-height:58px}
.tabs .cut{width:213px}
.tabs i{width:64px;border-right:2px solid #c8c8c8;display:flex;align-items:center;justify-content:center;flex:none}
.tabs i svg{width:40px;height:40px;fill:none;stroke:#666;stroke-width:2;margin-left:2px}
.status{height:40px;flex:none;display:flex;background:linear-gradient(#ececec,#e2e2e2);color:#000;font-size:21px;line-height:39px;padding-left:25px;letter-spacing:-.08px;white-space:nowrap}
.status div{border-left:2px solid #ccc;display:flex;align-items:center;height:40px}
.status .user{margin-left:auto;width:254px;padding-left:10px;gap:19px;letter-spacing:-.3px}
.status .tri{margin-left:auto;margin-right:15px}
.nav{width:142px;padding-left:15px}
.views{width:153px;padding-left:16px}

/* Dock */
.dock{flex:none;width:2748px;height:102px;margin:40px 0 0 66px;border:2px solid rgba(185,165,240,.5);border-radius:32px;background:linear-gradient(90deg,#62598f 0,#625a94 20%,#6a58ac 38%,#715bc4 52%,#8560da 62%,#9863f0 70%,#9a63f2 80%,#8660e8 90%,#7a5cd8 100%);background-clip:padding-box;display:flex;padding:13px 0 0 4px;box-shadow:0 0 0 1px rgba(0,0,0,.3)}
.app{width:83.200px;height:90px;flex:none;display:flex;flex-direction:column;align-items:center}
.app>svg{width:64px;height:64px;flex:none;filter:drop-shadow(0 1px 2px rgba(0,0,0,.35))}
.app>svg.wide{width:68px}
.app>svg.tall{height:76px;margin:-6px 0}
.app>svg.huge{width:70px;height:70px;margin:-3px 0}
.app.on:after{content:"";width:8px;height:8px;border-radius:50%;background:#160a6a;margin-top:11px}
.app.on:first-child:after{background:#020014}
.dsep{width:2px;height:74px;margin:-2px 16px 0 19px;background:#5a35b0}
.dsep.two{margin-right:20px}
.thumb>svg{width:76px;height:56px;margin:14px 4px 0 0}
.bin>svg{margin-left:-4px!important}
.dock text{text-anchor:middle;fill:#fff}
.mar{font:700 13px Roboto,sans-serif}
.dock .day{fill:#222;font:300 37px Roboto,sans-serif}
.tv{font:500 27px Roboto,sans-serif}
.ms{font:700 19px "Open Sans",sans-serif}
.tiny{font-size:9px}
.dock .zip{fill:#888;font:11px Roboto,sans-serif}
```
FILE: heat.js
```js
// Position on the colour scale (0-100) for each hour, Sunday to Saturday.
const rows = [
  ["12 AM",12,8,8,8,9,11,15],["1 AM",10,4,4,4,5,6,11],["2 AM",7,2,2,2,3,4,8],["3 AM",4,1,1,1,2,3,6],
  ["4 AM",3,2,1,2,2,2,3],["5 AM",3,8,9,9,10,9,4],["6 AM",4,19,22,20,25,21,8],["7 AM",10,36,39,38,47,40,15],
  ["8 AM",16,63,68,68,83,67,26],["9 AM",24,44,49,51,62,53,39],["10 AM",33,26,27,27,35,33,57],["11 AM",41,26,26,26,35,36,68],
  ["12 PM",47,29,25,28,40,44,71],["1 PM",51,30,26,27,42,48,66],["2 PM",51,30,28,27,41,52,65],["3 PM",51,35,34,24,44,60,66],
  ["4 PM",53,46,45,31,61,68,65],["5 PM",49,82,82,47,97,83,64],["6 PM",42,82,82,47,100,73,60],["7 PM",36,61,59,38,73,58,50],
  ["8 PM",27,39,39,27,42,38,36],["9 PM",21,24,26,21,31,26,26],["10 PM",16,17,19,17,23,23,23],["11 PM",12,11,12,12,16,18,19]
];
const stops = [
  [0,243,209,104],[5,244,204,100],[8,245,199,95],[11,245,193,91],[15,246,184,88],[19,247,176,84],[23,249,168,80],
  [26,251,160,79],[30,253,151,78],[33,254,146,77],[37,251,138,76],[41,248,131,75],[46,244,123,74],[50,240,116,73],
  [57,234,106,73],[63,229,95,72],[69,222,86,72],[73,217,80,71],[82,205,63,67],[96,189,35,64],[100,183,29,62]
];
function colour(t) {
  let k = 1;
  while (stops[k][0] < t) k++;
  const a = stops[k - 1], b = stops[k], f = (t - a[0]) / (b[0] - a[0]);
  return `rgb(${[1, 2, 3].map(n => Math.round(a[n] + (b[n] - a[n]) * f)).join()})`;
}
document.getElementById("heat").innerHTML = rows.map(([hour, ...v]) =>
  `<b>${hour}</b>` + v.map(t => `<span style="background:${colour(t)}"></span>`).join("")).join("");
```
